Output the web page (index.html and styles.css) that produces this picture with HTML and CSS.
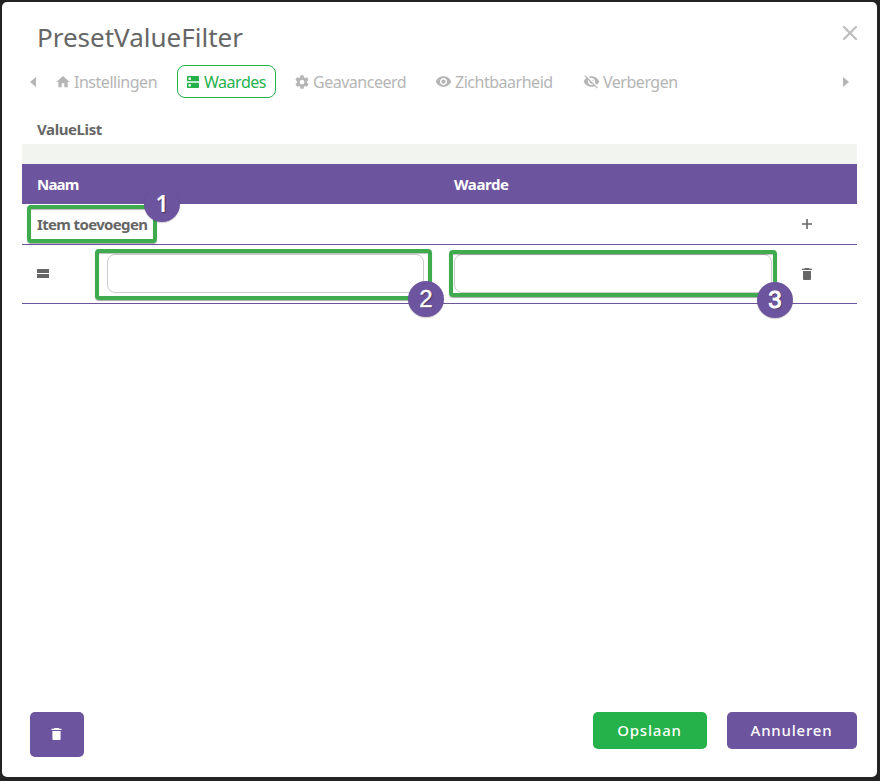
FILE: index.html
```html
<!DOCTYPE html>
<html lang="nl">
<head>
<meta charset="utf-8">
<title>PresetValueFilter</title>
<link rel="stylesheet" href="styles.css">
</head>
<body>
<main class="dialog">
  <header class="head">
    <h1><span>PresetValueFilter</span></h1>
    <svg class="close" viewBox="0 0 16 16"><path d="M2 2l12 12M14 2L2 14"/></svg>
  </header>
  <nav class="tabs">
    <svg class="arrow" viewBox="0 0 6 10"><path d="M6 0v10L0 5z"/></svg>
    <div class="tab t1"><svg viewBox="0 0 24 24"><path d="M10 20v-6h4v6h5v-8h3L12 3 2 12h3v8z"/></svg><span>Instellingen</span></div>
    <div class="tab t2 active"><svg viewBox="0 0 24 24"><path d="M20 13H4c-.55 0-1 .45-1 1v6c0 .55.45 1 1 1h16c.55 0 1-.45 1-1v-6c0-.55-.45-1-1-1zM7 19c-1.1 0-2-.9-2-2s.9-2 2-2 2 .9 2 2-.9 2-2 2zM20 3H4c-.55 0-1 .45-1 1v6c0 .55.45 1 1 1h16c.55 0 1-.45 1-1V4c0-.55-.45-1-1-1zM7 9c-1.1 0-2-.9-2-2s.9-2 2-2 2 .9 2 2-.9 2-2 2z"/></svg><span>Waardes</span></div>
    <div class="tab t3"><svg viewBox="0 0 24 24"><path d="M19.43 12.98c.04-.32.07-.64.07-.98s-.03-.66-.07-.98l2.11-1.65c.19-.15.24-.42.12-.64l-2-3.46c-.12-.22-.39-.3-.61-.22l-2.49 1c-.52-.4-1.08-.73-1.69-.98l-.38-2.65C14.46 2.18 14.25 2 14 2h-4c-.25 0-.46.18-.49.42l-.38 2.65c-.61.25-1.17.59-1.69.98l-2.49-1c-.23-.09-.49 0-.61.22l-2 3.46c-.13.22-.07.49.12.64l2.11 1.65c-.04.32-.07.65-.07.98s.03.66.07.98l-2.11 1.65c-.19.15-.24.42-.12.64l2 3.46c.12.22.39.3.61.22l2.49-1c.52.4 1.08.73 1.69.98l.38 2.65c.03.24.24.42.49.42h4c.25 0 .46-.18.49-.42l.38-2.65c.61-.25 1.17-.59 1.69-.98l2.49 1c.23.09.49 0 .61-.22l2-3.46c.12-.22.07-.49-.12-.64l-2.11-1.65zM12 15.5c-1.93 0-3.500-1.570-3.500-3.500s1.570-3.500 3.500-3.500 3.500 1.570 3.500 3.500-1.570 3.500-3.500 3.500z"/></svg><span>Geavanceerd</span></div>
    <div class="tab t4"><svg viewBox="0 0 24 24"><path d="M12 4.500C7 4.500 2.730 7.610 1 12c1.730 4.390 6 7.500 11 7.500s9.270-3.110 11-7.500c-1.730-4.390-6-7.500-11-7.500zM12 17c-2.760 0-5-2.240-5-5s2.240-5 5-5 5 2.240 5 5-2.240 5-5 5zm0-8c-1.660 0-3 1.340-3 3s1.340 3 3 3 3-1.340 3-3-1.340-3-3-3z"/></svg><span>Zichtbaarheid</span></div>
    <div class="tab t5"><svg viewBox="0 0 24 24"><path d="M12 7c2.760 0 5 2.240 5 5 0 .65-.13 1.260-.36 1.830l2.920 2.920c1.510-1.260 2.700-2.890 3.430-4.750-1.730-4.390-6-7.500-11-7.500-1.400 0-2.740.25-3.980.7l2.160 2.160C10.740 7.130 11.350 7 12 7zM2 4.270l2.280 2.280.46.46C3.080 8.300 1.780 10.020 1 12c1.730 4.390 6 7.500 11 7.500 1.550 0 3.030-.3 4.380-.84l.42.42L19.730 22 21 20.730 3.270 3 2 4.270zM7.530 9.800l1.550 1.550c-.05.21-.08.43-.08.65 0 1.660 1.340 3 3 3 .22 0 .44-.03.65-.08l1.550 1.550c-.67.33-1.410.53-2.200.53-2.760 0-5-2.240-5-5 0-.79.2-1.530.53-2.200zm4.310-.78l3.150 3.150.02-.16c0-1.660-1.340-3-3-3l-.17.01z"/></svg><span>Verbergen</span></div>
    <svg class="arrow next" viewBox="0 0 6 10"><path d="M0 0v10l6-5z"/></svg>
  </nav>
  <section class="list">
    <h2><span>ValueList</span></h2>
    <div class="strip"></div>
    <div class="row columns"><span class="naam">Naam</span><span class="waarde">Waarde</span></div>
    <div class="row add">
      <span class="add-label">Item toevoegen</span>
      <svg class="row-icon" viewBox="0 0 10 10"><path d="M4.200 0h1.600v4.200H10v1.600H5.800V10H4.200V5.800H0V4.200h4.200z"/></svg>
      <div class="mark m1"><b class="badge">1</b></div>
    </div>
    <div class="row item">
      <svg class="grip" viewBox="0 0 12 9"><path d="M0 0h12v4H0zM0 5h12v4H0z"/></svg>
      <input class="f1" aria-label="Naam"><input class="f2" aria-label="Waarde">
      <svg class="row-icon bin" viewBox="0 0 10 12"><path d="M3 0h4l.7.7H10V2H0V.7h2.300zM1 3h8v8q0 1-1 1H2q-1 0-1-1z"/></svg>
      <div class="mark m2"><b class="badge regular">2</b></div>
      <div class="mark m3"><b class="badge helv">3</b></div>
    </div>
  </section>
  <footer class="foot">
    <button class="btn delete" aria-label="Verwijderen"><svg viewBox="0 0 10 12"><path d="M3 0h4l.7.7H10V2H0V.7h2.300zM.9 3h8.200v8q0 1-1 1H1.900q-1 0-1-1z"/></svg></button>
    <button class="btn save"><span>Opslaan</span></button>
    <button class="btn cancel"><span>Annuleren</span></button>
  </footer>
</main>
</body>
</html>
```
FILE: styles.css
```css
* { box-sizing: border-box; }
body {
  margin: 0;
  height: 781px;
  padding: 2px 3px 4px 2px;
  background: #242323;
  font-family: "Noto Sans", sans-serif;
  color: #666;
  overflow: hidden;
}
svg { display: block; flex: none; fill: currentColor; }
.dialog {
  height: 775px;
  background: #fff;
  border-radius: 5px;
  display: flex;
  flex-direction: column;
}
.head { display: flex; justify-content: space-between; height: 63px; padding: 0 19px 0 35px; }
h1 { margin: 0; padding-top: 17px; font-size: 26px; line-height: 36px; font-weight: 400; }
.close { width: 16px; height: 16px; margin-top: 23px; stroke: #bdbdbd; stroke-width: 2.2; stroke-linecap: round; }
.tabs { display: flex; align-items: center; height: 33px; padding: 0 28px; color: #b5b5b5; }
.arrow { width: 6px; height: 10px; margin-right: 10px; }
.next { margin: 0 0 0 auto; }
.tab {
  height: 33px;
  padding: 0 0 0 8px;
  margin-right: 10px;
  display: flex;
  align-items: center;
  gap: 3px;
  border: 1px solid transparent;
  border-radius: 8px;
  font-size: 16px;
  white-space: nowrap;
  letter-spacing: -0.48px;
}
.tab svg { width: 16px; height: 16px; }
.active { color: #25b24b; border-color: #25b24b; }
.t1 { width: 121px; }
.t2 { width: 99px; padding-left: 7px; }
.t3 { width: 130px; padding-left: 7px; }
.t4 { width: 139px; }
.t4 svg, .t5 svg { width: 17px; height: 17px; }
.t5 { width: 120px; padding-left: 7px; }
.list { padding: 19px 20px 0; }
h2 { margin: 0; padding-left: 15px; height: 27px; font-size: 15px; line-height: 25px; letter-spacing: -0.4px; }
.strip { height: 20px; background: #f2f4ef; }
.row { position: relative; display: flex; align-items: center; font-size: 15px; font-weight: 700; letter-spacing: -0.4px; }
.columns { height: 40px; padding: 0 15px; background: #6d549e; color: #fff; }
.naam { width: 417px; letter-spacing: -0.8px; }
.add { height: 41px; padding-left: 15px; border-bottom: 1px solid #6d549e; }
.add-label { width: 765px; letter-spacing: -0.65px; }
.row-icon { width: 10px; height: 10px; }
.item { height: 59px; padding-left: 15px; border-bottom: 1px solid #6d549e; }
.grip { width: 12px; height: 9px; margin-bottom: 1px; }
input { height: 39px; padding: 0 10px; border: 1px solid #ccc; border-radius: 8px; background: #fff; outline: 0; margin-bottom: 1px; }
.f1 { width: 317px; margin-left: 58px; }
.f2 { width: 318px; margin-left: 30px; }
.bin { height: 12px; margin-left: 30px; }
.mark { position: absolute; border: 4px solid #3eab4f; border-radius: 4px; box-shadow: 0 1px 1px #0005, inset 0 1px 1px #0004; }
.m1 { left: 5px; top: 1px; width: 130px; height: 38px; }
.m2 { left: 73px; top: 4px; width: 337px; height: 51px; }
.m3 { left: 427px; top: 5px; width: 328px; height: 47px; }
.badge {
  position: absolute;
  width: 36px;
  height: 36px;
  border-radius: 50%;
  background: #6d549e;
  color: #fff;
  font: 600 23px/34px "Noto Sans", sans-serif;
  letter-spacing: 0;
  text-align: center;
  text-shadow: 1px 1px 1px #0006;
  box-shadow: 0 1px 1px #0003;
}
.m1 .badge { left: 113px; top: -23px; }
.m2 .badge { left: 309px; top: 28px; }
.m3 .badge { left: 304px; top: 28px; }
.badge.regular { font: 400 24px/36px "Liberation Sans", sans-serif; -webkit-text-stroke: 0.4px #fff; }
.badge.helv { font: 400 24px/36px "Liberation Sans", sans-serif; -webkit-text-stroke: 0.9px #fff; }
.foot { display: flex; align-items: flex-start; margin-top: auto; height: 65px; padding: 0 20px 0 28px; }
.btn {
  display: flex;
  align-items: center;
  justify-content: center;
  height: 37px;
  padding: 0 1px 1px 0;
  border: 0;
  border-radius: 5px;
  background: #6d549e;
  color: #fff;
  font: 500 15px "Noto Sans", sans-serif;
  letter-spacing: 0.8px;
}
.delete { width: 54px; height: 45px; }
.delete svg { width: 11px; height: 12px; }
.save { width: 114px; margin-left: auto; background: #25b24b; }
.cancel { width: 130px; margin-left: 20px; }
```
